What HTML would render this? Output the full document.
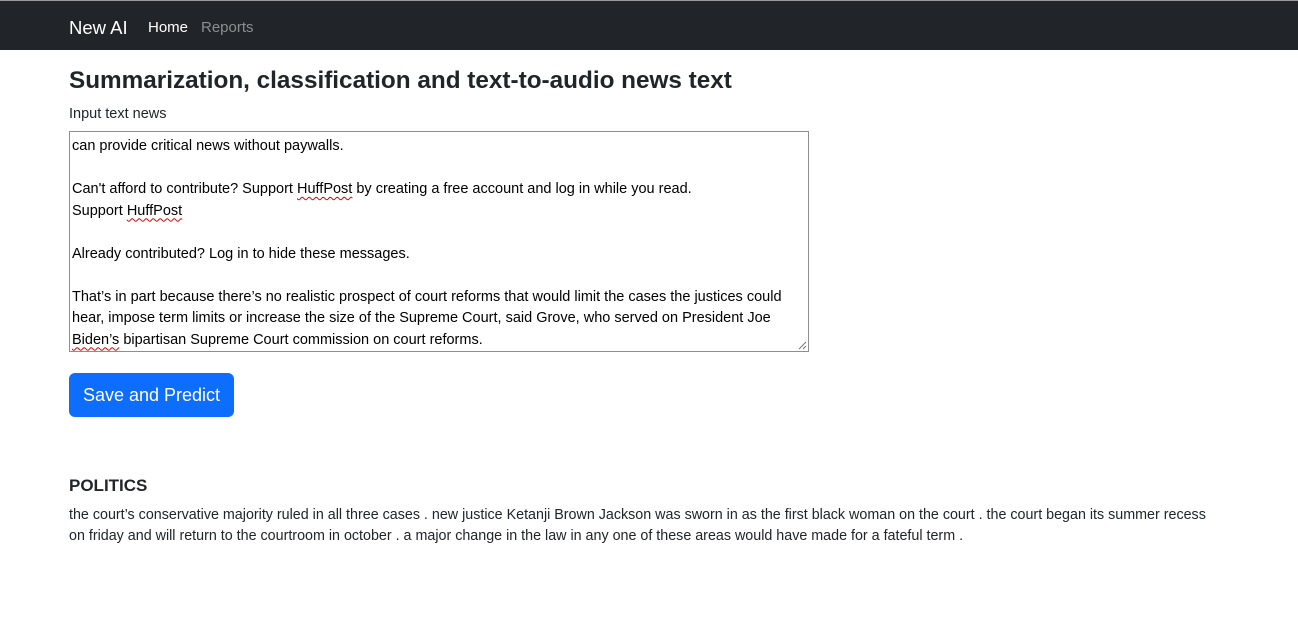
<!DOCTYPE html>
<html><head><meta charset="utf-8"><style>
body{margin:0;width:1298px;height:628px;background:#fff;font-family:"Liberation Sans","DejaVu Sans",sans-serif;color:#212529;position:relative;overflow:hidden}
.nav{position:absolute;left:0;top:0;width:1298px;height:50px;background:#212529;border-top:1px solid #9a9a9a;box-sizing:border-box}
.nav span{position:absolute;top:18px}
.a{position:absolute}
.ta{position:absolute;left:69px;top:131px;width:740px;height:221px;border:1px solid #8f8f8f;box-sizing:border-box;padding:4px 2px;font-size:14.5px;line-height:21.5px;color:#000;overflow:hidden;white-space:pre-wrap}
.sq{text-decoration:underline wavy #d00;text-decoration-thickness:1px;text-underline-offset:3px}
</style></head><body>
<div class="nav">
<span style="left:69px;top:16px;font-size:18.5px;color:#fff">New AI</span>
<span style="left:148px;font-size:15px;color:#fff">Home</span>
<span style="left:201px;font-size:15px;color:#8c8e91">Reports</span>
</div>
<div class="a" style="left:69px;top:67px;font-size:24.3px;font-weight:bold;color:#212529">Summarization, classification and text-to-audio news text</div>
<div class="a" style="left:69px;top:106px;font-size:14.5px">Input text news</div>
<div class="ta">can provide critical news without paywalls.

Can't afford to contribute? Support <span class="sq">HuffPost</span> by creating a free account and log in while you read.
Support <span class="sq">HuffPost</span>

Already contributed? Log in to hide these messages.

That’s in part because there’s no realistic prospect of court reforms that would limit the cases the justices could hear, impose term limits or increase the size of the Supreme Court, said Grove, who served on President Joe <span class="sq">Biden’s</span> bipartisan Supreme Court commission on court reforms.</div>
<svg class="a" style="left:797px;top:340px" width="10" height="10"><path d="M9 2L2 9M9 6L6 9" stroke="#777" stroke-width="1"/></svg>
<div class="a" style="left:69px;top:373px;width:165px;height:44px;background:#0d6efd;border-radius:6px;color:#fff;font-size:18px;line-height:44px;text-align:center">Save and Predict</div>
<div class="a" style="left:69px;top:476px;font-size:17px;font-weight:bold">POLITICS</div>
<div class="a" style="left:69px;top:505px;width:1140px;font-size:14.3px;line-height:21px">the court’s conservative majority ruled in all three cases . new justice Ketanji Brown Jackson was sworn in as the first black woman on the court . the court began its summer recess on friday and will return to the courtroom in october . a major change in the law in any one of these areas would have made for a fateful term .</div>
</body></html>
